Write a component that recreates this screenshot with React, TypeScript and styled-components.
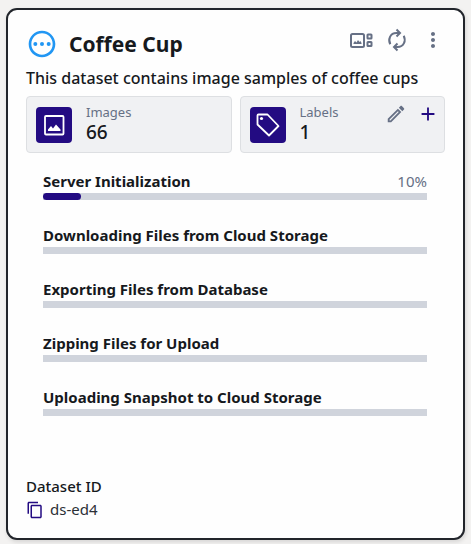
import React from 'react';
import styled, { createGlobalStyle } from 'styled-components';
import { MdMoreVert, MdOutlinePending, MdOutlineEdit, MdAdd, MdContentCopy } from 'react-icons/md';

const Global = createGlobalStyle`
  * { box-sizing: border-box; }
  body {
    margin: 0;
    background: #f3f2f1;
    color: #16191d;
    font-family: "Noto Sans", "Open Sans", sans-serif;
  }
`;

const Card = styled.article`
  margin: 8px 6px 4px;
  padding: 18px 18px 17px;
  background: #fefefe;
  border: 2px solid #22252b;
  border-radius: 11px;
  box-shadow: 1px 2px 4px rgba(0, 0, 0, 0.12);
`;

const Header = styled.header`
  display: flex;
  align-items: center;
  height: 32px;
`;

const Status = styled.span`
  display: flex;
  color: #2196f3;
`;

const Title = styled.h1`
  flex: 1;
  margin: 0 0 0 11px;
  font-size: 21px;
  font-weight: 700;
  line-height: 32px;
`;

const Actions = styled.div`
  display: flex;
  align-items: center;
  gap: 12px;
  height: 24px;
  margin-bottom: 8px;
`;

const IconButton = styled.button<{ $accent?: boolean }>`
  display: flex;
  padding: 0;
  border: 0;
  background: none;
  color: ${(p) => (p.$accent ? '#230b82' : '#667085')};
  cursor: pointer;
`;

const Description = styled.p`
  margin: 6px 0;
  font-size: 16px;
  font-weight: 500;
  line-height: 24px;
`;

const Stats = styled.div`
  display: grid;
  grid-template-columns: 1fr 1fr;
  gap: 8px;
`;

const Stat = styled.section`
  display: flex;
  align-items: flex-start;
  gap: 14px;
  padding: 6px 5px 6px 9px;
  background: #f0f1f3;
  border: 1px solid #dddfe2;
  border-radius: 4px;
`;

const Tile = styled.span`
  display: flex;
  align-items: center;
  justify-content: center;
  align-self: center;
  width: 36px;
  height: 36px;
  border-radius: 4px;
  background: #230b82;
  color: #ffffff;
`;

const StatText = styled.div`
  flex: 1;
`;

const StatLabel = styled.div`
  font-size: 13px;
  line-height: 18px;
  color: #667085;
`;

const StatValue = styled.div`
  font-size: 19px;
  font-weight: 500;
  line-height: 22px;
  padding-bottom: 3px;
`;

const StatActions = styled.div`
  display: flex;
  gap: 10px;
`;

const Steps = styled.ul`
  display: grid;
  gap: 24px;
  margin: 17px 0 0;
  padding: 0 18px 0 17px;
  list-style: none;
`;

const StepHead = styled.div`
  display: flex;
  justify-content: space-between;
  padding-bottom: 1px;
  font-size: 15px;
  font-weight: 700;
  line-height: 22px;
`;

const Percent = styled.span`
  font-weight: 400;
  color: #667085;
`;

const Track = styled.div`
  height: 7px;
  background: #d0d4dc;
`;

const Fill = styled.div`
  height: 7px;
  border-radius: 4px;
  background: #230b82;
`;

const Footer = styled.footer`
  margin-top: 59px;
  font-size: 15px;
  line-height: 23px;
`;

const FooterLabel = styled.div`
  font-weight: 500;
`;

const IdRow = styled.div`
  display: flex;
  align-items: center;
  gap: 6px;
  color: #2c3036;
`;

const GalleryIcon = () => (
  <svg width="24" height="24" viewBox="0 0 24 24" fill="none" stroke="currentColor" strokeWidth="2">
    <rect x="2" y="6" width="13" height="13" rx="1.5" />
    <path d="M4.500 16v-1l1.500-2 1.500 1.500 1.500-2.500 1.500 2 1-1 1 2v1z" fill="currentColor" stroke="none" />
    <rect x="18.500" y="6.500" width="4" height="4" rx="0.500" />
    <rect x="18.500" y="14" width="4" height="4" rx="0.500" />
  </svg>
);

const CycleIcon = () => (
  <svg width="24" height="24" viewBox="0 0 24 24" fill="none" stroke="currentColor" strokeWidth="2">
    <path d="M5.300 16.300C2.800 11.500 5 5 11.500 5h3" />
    <path d="M11.500 1.500l3.500 3.500-3.500 3.500" />
    <path d="M18.700 7.700C21.200 12.500 19 19 12.500 19h-3" />
    <path d="M12.500 15.500l-3.500 3.500 3.500 3.500" />
  </svg>
);

const PictureIcon = () => (
  <svg width="24" height="24" viewBox="0 0 24 24" fill="none">
    <rect x="3" y="3" width="18.500" height="18.500" rx="1" stroke="currentColor" strokeWidth="1.800" />
    <path d="M6 18v-1.500l3-3.500 2 2.500 3-4 4.500 5v1.500z" fill="currentColor" />
  </svg>
);

const TagIcon = () => (
  <svg width="24" height="24" viewBox="0 0 24 24" fill="none" stroke="currentColor" strokeWidth="1.800" strokeLinejoin="round">
    <path d="M1.500 2.500q0-1 1-1h9l11 11.500-9.500 9.500-11.500-11z" />
    <circle cx="5.500" cy="5.500" r="1.600" fill="currentColor" stroke="none" />
  </svg>
);

const steps = [
  { name: 'Server Initialization', percent: 10 },
  { name: 'Downloading Files from Cloud Storage', percent: 0 },
  { name: 'Exporting Files from Database', percent: 0 },
  { name: 'Zipping Files for Upload', percent: 0 },
  { name: 'Uploading Snapshot to Cloud Storage', percent: 0 },
];

export default function App() {
  return (
    <>
      <Global />
      <Card>
        <Header>
          <Status><MdOutlinePending size={32} /></Status>
          <Title>Coffee Cup</Title>
          <Actions>
            <IconButton aria-label="View samples"><GalleryIcon /></IconButton>
            <IconButton aria-label="Refresh"><CycleIcon /></IconButton>
            <IconButton aria-label="More"><MdMoreVert size={24} /></IconButton>
          </Actions>
        </Header>
        <Description>This dataset contains image samples of coffee cups</Description>
        <Stats>
          <Stat>
            <Tile><PictureIcon /></Tile>
            <StatText>
              <StatLabel>Images</StatLabel>
              <StatValue>66</StatValue>
            </StatText>
          </Stat>
          <Stat>
            <Tile><TagIcon /></Tile>
            <StatText>
              <StatLabel>Labels</StatLabel>
              <StatValue>1</StatValue>
            </StatText>
            <StatActions>
              <IconButton aria-label="Edit labels"><MdOutlineEdit size={22} /></IconButton>
              <IconButton $accent aria-label="Add label"><MdAdd size={22} /></IconButton>
            </StatActions>
          </Stat>
        </Stats>
        <Steps>
          {steps.map((s) => (
            <li key={s.name}>
              <StepHead>
                <span>{s.name}</span>
                {s.percent > 0 && <Percent>{s.percent}%</Percent>}
              </StepHead>
              <Track role="progressbar" aria-label={s.name} aria-valuenow={s.percent} aria-valuemin={0} aria-valuemax={100}>
                <Fill style={{ width: `${s.percent}%` }} />
              </Track>
            </li>
          ))}
        </Steps>
        <Footer>
          <FooterLabel>Dataset ID</FooterLabel>
          <IdRow>
            <IconButton $accent aria-label="Copy dataset ID"><MdContentCopy size={18} /></IconButton>
            <span>ds-ed4</span>
          </IdRow>
        </Footer>
      </Card>
    </>
  );
}
